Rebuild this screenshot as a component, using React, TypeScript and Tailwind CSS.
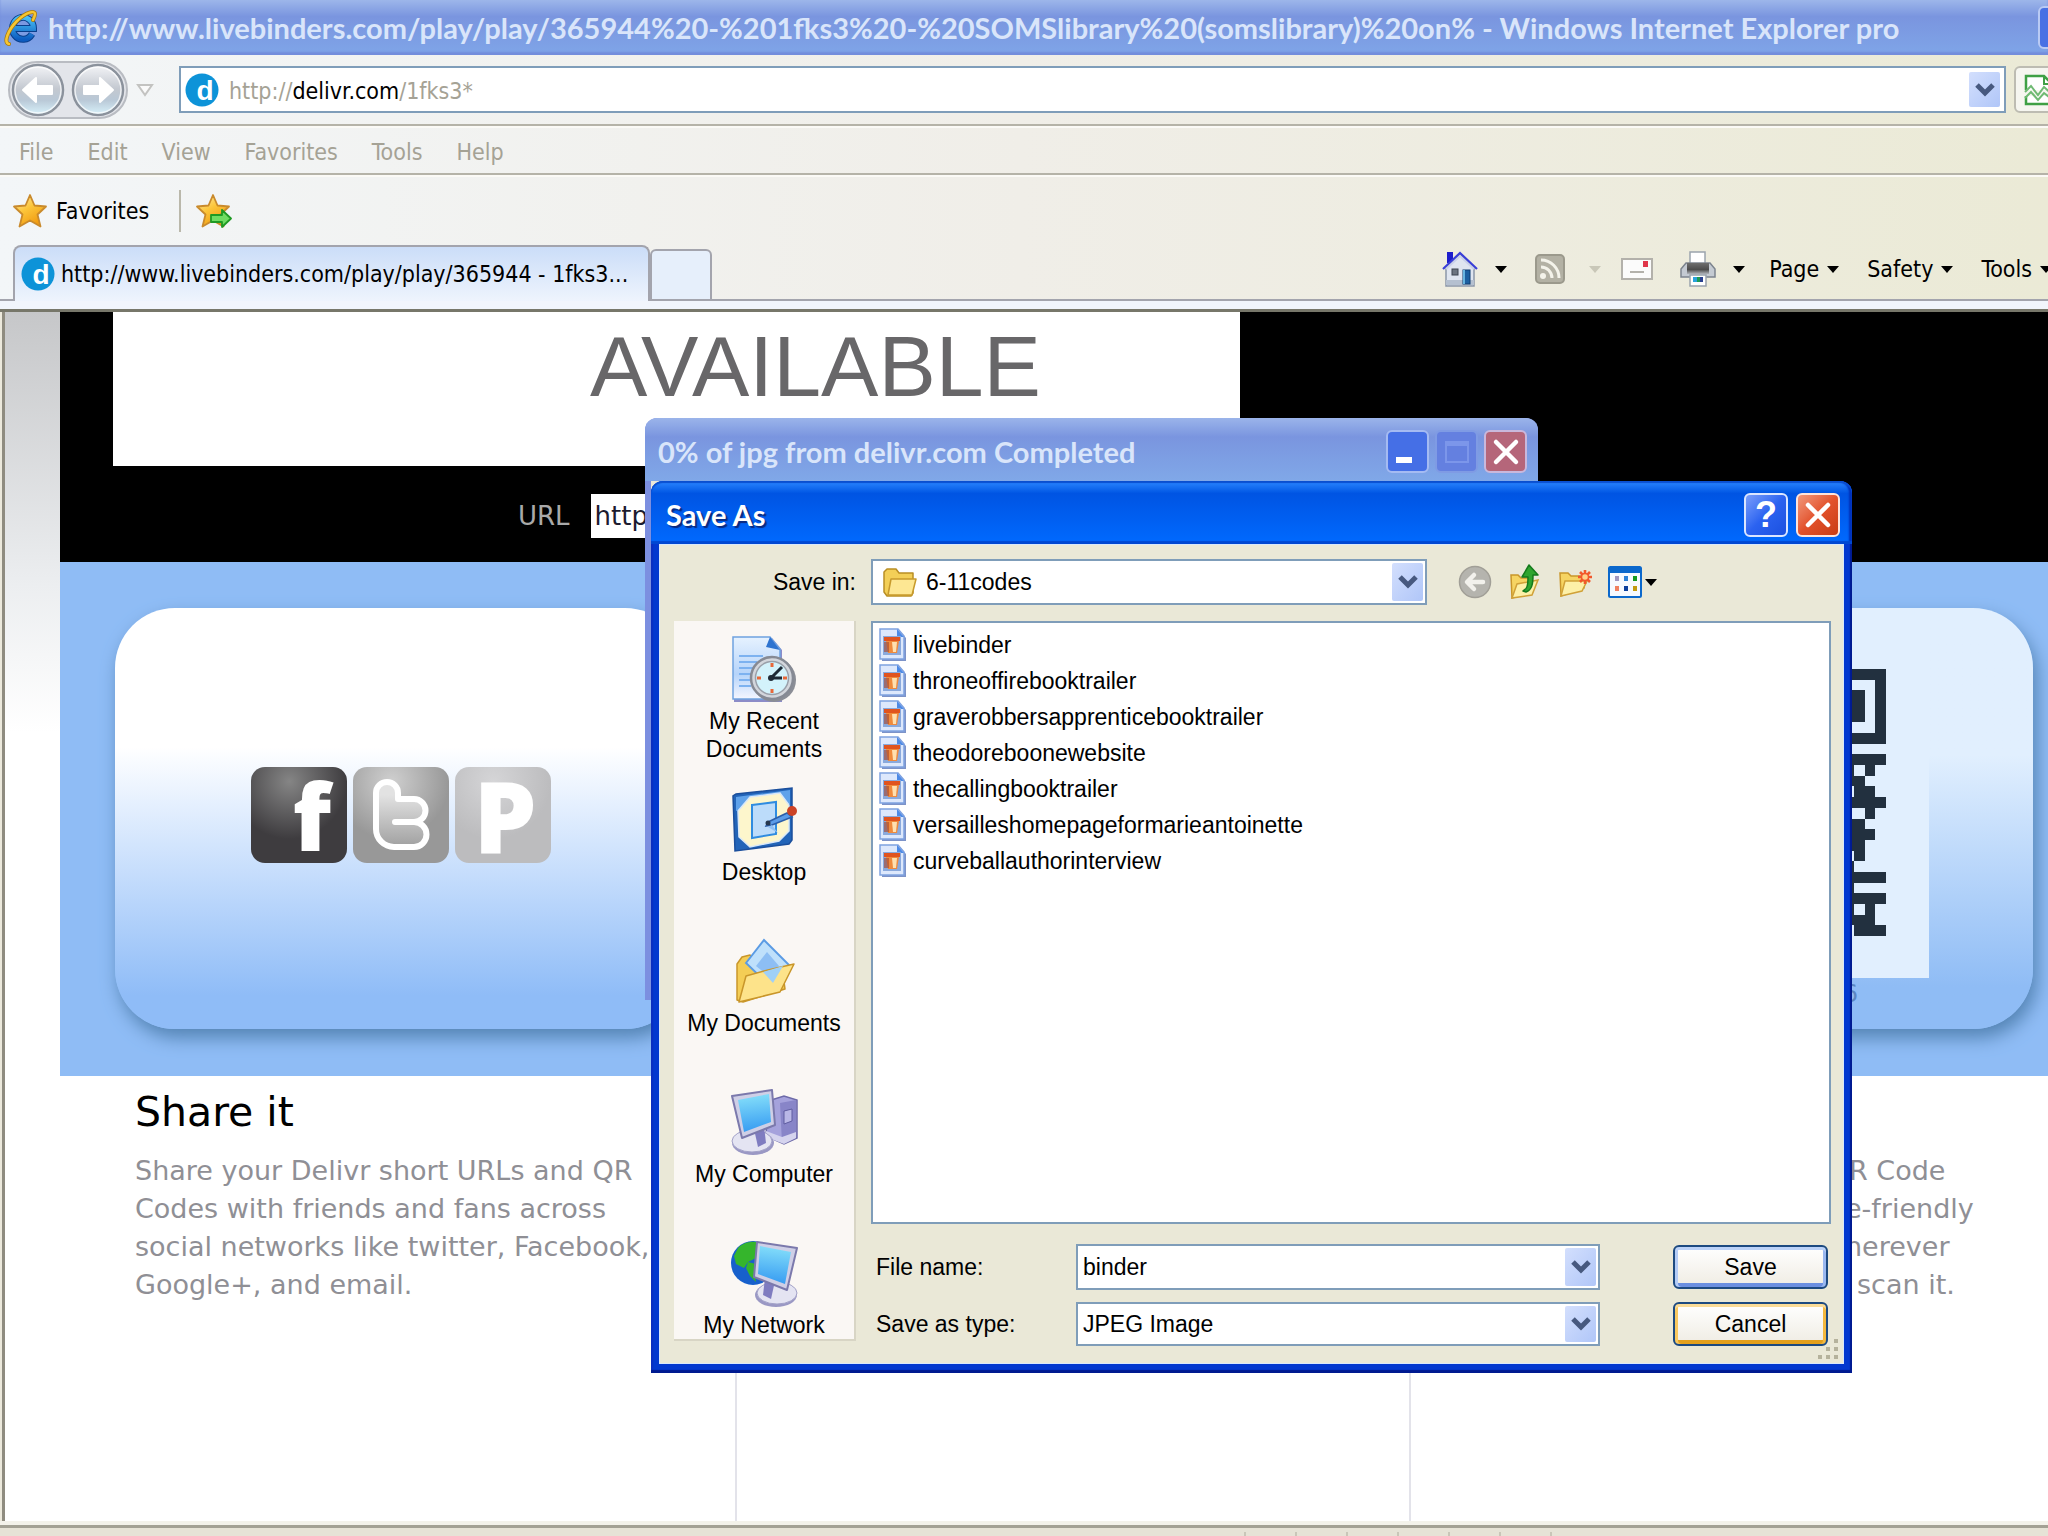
import React from 'react';

const menus = ['File', 'Edit', 'View', 'Favorites', 'Tools', 'Help'];

const files = [
  'livebinder',
  'throneoffirebooktrailer',
  'graverobbersapprenticebooktrailer',
  'theodoreboonewebsite',
  'thecallingbooktrailer',
  'versailleshomepageformarieantoinette',
  'curveballauthorinterview',
];

// Right hand columns of the QR code, one string per module row
const qrRows = [
  '1111', '0001', '1101', '1101', '1101', '0001', '1111', '0000', '1111',
  '1010', '1100', '0110', '1111', '0010', '1100', '1110', '1100', '0100',
  '1000', '1111', '1000', '1111', '1010', '1110', '0111',
];

const IeLogo: React.FC = () => (
  <svg viewBox="0 0 34 36" className="h-9 w-[34px] shrink-0" aria-hidden="true">
    <defs>
      <linearGradient id="ie" x1="0" y1="0" x2="0" y2="1">
        <stop offset="0" stopColor="#49c0f6" />
        <stop offset="1" stopColor="#0c5cc0" />
      </linearGradient>
    </defs>
    <path
      d="M28 24a10.500 11 0 1 1 1.500-5.500H11"
      fill="none"
      stroke="#0a3f8c"
      strokeWidth="7"
    />
    <path
      d="M28 24a10.500 11 0 1 1 1.500-5.500H11"
      fill="none"
      stroke="url(#ie)"
      strokeWidth="5"
    />
    <path
      d="M5 34C-1 33 4 20 13 11S31 0 31 4c0 1-1 4-2 6"
      fill="none"
      stroke="#a87a10"
      strokeWidth="4"
      strokeLinecap="round"
    />
    <path
      d="M5 34C-1 33 4 20 13 11S31 0 31 4c0 1-1 4-2 6"
      fill="none"
      stroke="#f6c632"
      strokeWidth="2.500"
      strokeLinecap="round"
    />
  </svg>
);

const DelivrIcon: React.FC = () => (
  <svg viewBox="0 0 34 34" className="size-[34px] shrink-0" aria-hidden="true">
    <circle cx="17" cy="17" r="16.500" fill="#0d93d8" />
    <text
      x="20"
      y="27"
      textAnchor="middle"
      fontSize="28"
      fontWeight="700"
      fontFamily="Liberation Sans, sans-serif"
      fill="#fff"
    >
      d
    </text>
  </svg>
);

const NavArrow: React.FC<{ flip?: boolean }> = ({ flip }) => (
  <svg viewBox="0 0 54 54" className="size-[54px]" aria-hidden="true">
    <defs>
      <linearGradient id={flip ? 'navf' : 'navb'} x1="0" y1="0" x2="0" y2="1">
        <stop offset="0" stopColor="#f4f5f8" />
        <stop offset="0.48" stopColor="#c3c8d0" />
        <stop offset="0.7" stopColor="#b9c8d6" />
        <stop offset="1" stopColor="#d9f3fc" />
      </linearGradient>
    </defs>
    <circle cx="27" cy="27" r="25" fill={flip ? 'url(#navf)' : 'url(#navb)'} stroke="#8b929c" strokeWidth="2.500" />
    <circle cx="27" cy="27" r="23" fill="none" stroke="#fff" strokeOpacity="0.7" strokeWidth="1.500" />
    <path
      d={flip ? 'M42 27 29 15v8H13v8h16v8z' : 'M12 27l13-12v8h16v8H25v8z'}
      fill="#fff"
      stroke="#fff"
      strokeWidth="2"
      strokeLinejoin="round"
    />
  </svg>
);

const Star: React.FC<{ add?: boolean }> = ({ add }) => (
  <svg viewBox="0 0 36 36" className="size-9 shrink-0" aria-hidden="true">
    <defs>
      <linearGradient id={add ? 'starA' : 'starF'} x1="0" y1="0" x2="0.6" y2="1">
        <stop offset="0" stopColor="#fff0b0" />
        <stop offset="0.5" stopColor="#fcc53a" />
        <stop offset="1" stopColor="#f09a10" />
      </linearGradient>
    </defs>
    <path
      d="M17 2l4.500 10.500L33 13.500l-8.500 8 3 12L17 27.500 6.500 33.500l3-12-8.500-8 11.500-1z"
      fill={add ? 'url(#starA)' : 'url(#starF)'}
      stroke="#c98a2c"
      strokeWidth="1.800"
      strokeLinejoin="round"
    />
    {add && (
      <path
        d="M15 22h11v-5l9 8.500-9 8.500v-5H15z"
        fill="#6fdc62"
        stroke="#1f9a24"
        strokeWidth="1.800"
        strokeLinejoin="round"
      />
    )}
  </svg>
);

const Caret: React.FC<{ light?: boolean }> = ({ light }) => (
  <svg viewBox="0 0 12 8" className="h-2 w-3 shrink-0" aria-hidden="true">
    <path d="M0 1h12L6 8z" fill={light ? '#c9c7b8' : '#000'} />
  </svg>
);

const HomeIcon: React.FC = () => (
  <svg viewBox="0 0 36 36" className="size-9" aria-hidden="true">
    <path d="M5 1h6v11H5z" fill="#1c1ccc" />
    <path d="M4 17 18 3l14 14v18H4z" fill="#dfe5f0" stroke="#8c97a8" strokeWidth="1.500" />
    <path d="M4 34h28v-5H4z" fill="#b5c0d0" />
    <path d="M1 18 18 2l17 16" fill="none" stroke="#3a3fd8" strokeWidth="2.200" />
    <path d="M4 18 18 5l14 13" fill="none" stroke="#c9d0ea" strokeWidth="2" />
    <rect x="10" y="18" width="6" height="6" fill="#6c7480" stroke="#3d4450" />
    <rect x="21" y="19" width="7" height="14" fill="#1c5fa0" stroke="#0f3d70" />
    <path d="M21 19h2v14h-2z" fill="#67b4e0" />
  </svg>
);

const RssIcon: React.FC = () => (
  <svg viewBox="0 0 30 30" className="size-[30px]" aria-hidden="true">
    <rect x="1" y="1" width="28" height="28" rx="4" fill="#b3b1a4" stroke="#9b998c" strokeWidth="2" />
    <circle cx="8" cy="22" r="3" fill="#f4f3ea" />
    <path d="M6 13a11 11 0 0 1 11 11M6 6a18 18 0 0 1 18 18" fill="none" stroke="#f4f3ea" strokeWidth="3" />
  </svg>
);

const MailIcon: React.FC = () => (
  <svg viewBox="0 0 32 24" className="h-6 w-8" aria-hidden="true">
    <rect x="1" y="2" width="30" height="20" fill="#fbfbfb" stroke="#b3b1ab" strokeWidth="2" />
    <path d="M9 15h14" stroke="#b3b1ab" strokeWidth="2" />
    <rect x="22" y="4" width="5" height="6" fill="#e0364a" />
  </svg>
);

const PrinterIcon: React.FC = () => (
  <svg viewBox="0 0 36 36" className="size-9" aria-hidden="true">
    <defs>
      <linearGradient id="prn" x1="0" y1="0" x2="0" y2="1">
        <stop offset="0" stopColor="#6e6e6e" />
        <stop offset="0.6" stopColor="#4c4c4c" />
        <stop offset="1" stopColor="#b0b4ba" />
      </linearGradient>
    </defs>
    <rect x="10" y="1" width="15" height="14" fill="#fff" stroke="#9ba4ad" strokeWidth="1.500" />
    <path d="M6 12h24l5 6v8H1v-8z" fill="#c4cad2" stroke="#7c848e" strokeWidth="1.500" />
    <path d="M7 12h22v11H7z" fill="url(#prn)" />
    <path d="M10 24h16v11H10z" fill="#fff" stroke="#9ba4ad" strokeWidth="1.500" />
    <path d="M13 26h4v5h-4z" fill="#2aa3dc" />
    <path d="M17 26h3v5h-3z" fill="#1d9a55" />
    <path d="M20 26h3v5h-3z" fill="#28418f" />
  </svg>
);

const BrokenPageIcon: React.FC = () => (
  <svg viewBox="0 0 32 32" className="size-8 shrink-0" aria-hidden="true">
    <path d="M2 16V2h18l8 8v6M2 22v8h26v-8" fill="#fff" stroke="#3fa045" strokeWidth="2.500" />
    <path d="M20 2v8h8" fill="none" stroke="#3fa045" strokeWidth="2" />
    <path d="M1 18l6-6 7 9 6-8 9 8M1 24l6-6 7 8 6-7 9 7" fill="none" stroke="#6fba73" strokeWidth="2" />
  </svg>
);

const BackRound: React.FC = () => (
  <svg viewBox="0 0 34 34" className="size-[34px]" aria-hidden="true">
    <circle cx="17" cy="17" r="15.500" fill="#b5b4ae" stroke="#a19f97" strokeWidth="1.500" />
    <path d="M9 17l7-7M9 17l7 7M10 17h15" fill="none" stroke="#f2f1ec" strokeWidth="4.500" strokeLinecap="round" />
  </svg>
);

const UpFolder: React.FC = () => (
  <svg viewBox="0 0 34 36" className="h-9 w-[34px]" aria-hidden="true">
    <path d="M3 11h7l3 3h11v14L4 34z" fill="#f6d462" stroke="#c9962a" strokeWidth="1.500" />
    <path d="M4 34 9 20l21-4-6 15z" fill="#fdf0a8" stroke="#d0a138" strokeWidth="1.500" />
    <path
      d="M15 27c4-2 5-5 5-14h-6L21 1l9 10h-5c0 9-1 15-7 17z"
      fill="#2fa52f"
      stroke="#157a1c"
      strokeWidth="1.500"
      strokeLinejoin="round"
    />
  </svg>
);

const NewFolder: React.FC = () => (
  <svg viewBox="0 0 34 34" className="size-[34px]" aria-hidden="true">
    <path d="M2 8h8l3 3h13v12L3 31z" fill="#f6d462" stroke="#c9962a" strokeWidth="1.500" />
    <path d="M3 31 7 16h22l-5 10z" fill="#fdf0a8" stroke="#d0a138" strokeWidth="1.500" />
    <path
      d="M27 5v14M20 12h14M22 7l10 10M32 7 22 17"
      stroke="#f2582c"
      strokeWidth="2.600"
    />
    <circle cx="27" cy="12" r="3.500" fill="#ffd08a" stroke="#f2582c" strokeWidth="1.500" />
  </svg>
);

const ViewsIcon: React.FC = () => (
  <svg viewBox="0 0 34 32" className="h-8 w-[34px]" aria-hidden="true">
    <rect x="1" y="1" width="32" height="30" rx="1.500" fill="#f7faff" stroke="#0b68cc" strokeWidth="2" />
    <rect x="1" y="1" width="32" height="6" fill="#0b68cc" />
    <rect x="7" y="10" width="4" height="5" fill="#a097c0" />
    <rect x="16" y="10" width="4" height="5" fill="#2d82d8" />
    <rect x="25" y="10" width="4" height="5" fill="#159a20" />
    <rect x="7" y="20" width="4" height="5" fill="#f08060" />
    <rect x="16" y="20" width="4" height="5" fill="#0c3f9c" />
    <rect x="25" y="20" width="4" height="5" fill="#c29a10" />
  </svg>
);

const FolderIcon: React.FC = () => (
  <svg viewBox="0 0 36 30" className="h-[30px] w-9" aria-hidden="true">
    <path d="M2 5l3-3h9l3 4h14v20l-2 3H5L2 25z" fill="#f3cf57" stroke="#b98e24" strokeWidth="1.500" strokeLinejoin="round" />
    <path d="M6 28 9 12h25l-4 16z" fill="#fde793" stroke="#c79a2c" strokeWidth="1.500" strokeLinejoin="round" />
  </svg>
);

const FileIcon: React.FC = () => (
  <svg viewBox="0 0 28 34" className="h-[34px] w-7 shrink-0" aria-hidden="true">
    <path d="M3 3h18l6 7v23H3z" fill="#7d93c8" />
    <path d="M1 1h18l6 7v23H1z" fill="#dde8fc" stroke="#7fa2e0" strokeWidth="1.500" />
    <path d="M18 1v8h7z" fill="#4d8ae6" />
    <rect x="4" y="8" width="18" height="19" fill="#8aa9dc" />
    <path d="M5 9h16v4H5z" fill="#e0541f" />
    <path d="M7 13h13l-2 12H9z" fill="#f08a3c" />
    <path d="M13 14h5l-1 10h-3z" fill="#ffe0b0" />
    <path d="M5 14h5v10H5z" fill="#a4462e" opacity="0.600" />
  </svg>
);

const RecentIcon: React.FC = () => (
  <svg viewBox="0 0 68 68" className="size-[68px]" aria-hidden="true">
    <defs>
      <linearGradient id="rdoc" x1="0" y1="0" x2="0" y2="1">
        <stop offset="0" stopColor="#e6f2ff" />
        <stop offset="0.6" stopColor="#b6d4fa" />
        <stop offset="1" stopColor="#f4f6ff" />
      </linearGradient>
    </defs>
    <path d="M4 66V2h38l10 12v52z" fill="#8c8cc8" />
    <path d="M3 63V1h37l10 12v50z" fill="url(#rdoc)" stroke="#6fa2e0" strokeWidth="1.500" />
    <path d="M40 1l-4 10 14 3z" fill="#2f74d0" />
    <path d="M9 20h24M9 26h18M9 32h14M9 38h12M9 44h12M9 50h12" stroke="#7db2f0" strokeWidth="2" />
    <circle cx="44" cy="44" r="22" fill="#8b8e96" />
    <circle cx="42" cy="42" r="21" fill="#d3d6dc" stroke="#868a94" strokeWidth="2.500" />
    <circle cx="42" cy="42" r="16.500" fill="#d3f2fb" stroke="#9aa0aa" strokeWidth="1.500" />
    <path d="M42 27v4M42 53v4M27 42h4M53 42h4" stroke="#e8683a" strokeWidth="3" />
    <path d="M40 43l12-12M42 42h10" stroke="#1f2a36" strokeWidth="3" />
    <circle cx="41" cy="42" r="3" fill="#1f2a36" />
  </svg>
);

const DesktopIcon: React.FC = () => (
  <svg viewBox="0 0 68 68" className="size-[68px]" aria-hidden="true">
    <path d="M5 64 3 9l3-2 56-6v52l-3 4z" fill="#2264b8" stroke="#1b4f9c" strokeWidth="1.500" />
    <path d="M6 10l54-7v14L6 24z" fill="#5fa2ea" />
    <path d="M8 24 20 10l30-4 9 12v26L49 54 20 60 9 50z" fill="#fdf6cc" stroke="#d9e8f8" strokeWidth="1.500" />
    <path d="M22 18l24-3v32l-24 4z" fill="#bcdcfa" stroke="#2f8ce0" strokeWidth="2" />
    <path d="M38 35 57 26l5 4-20 8-6 1z" fill="#5b9ce8" stroke="#2c5ea8" strokeWidth="1.500" />
    <path d="M42 38l6 8-10-6z" fill="#8fc0f4" />
    <circle cx="62" cy="24" r="5" fill="#cc4326" />
    <circle cx="38" cy="36" r="2.500" fill="#26384e" />
  </svg>
);

const DocumentsIcon: React.FC = () => (
  <svg viewBox="0 0 68 68" className="size-[68px]" aria-hidden="true">
    <path d="M7 62V26l5-7 8-2 8 8 24 4 3 22-42 13z" fill="#f4cd55" stroke="#c9962a" strokeWidth="1.500" strokeLinejoin="round" />
    <path d="M16 25 34 2l26 26-18 22z" fill="#bfe0fb" stroke="#5b9be4" strokeWidth="2" />
    <path d="M26 28l11-14 12 14-8 12z" fill="#8dbef4" />
    <path d="M9 64 16 38l22-6 26-6-14 28z" fill="#fde38a" stroke="#c9962a" strokeWidth="1.500" strokeLinejoin="round" />
    <path d="M33 34l20-6-10 17z" fill="#9fd0f8" />
  </svg>
);

const Monitor: React.FC<{ id: string }> = ({ id }) => (
  <>
    <defs>
      <linearGradient id={id} x1="0.300" y1="0" x2="0.400" y2="1">
        <stop offset="0" stopColor="#86e0fa" />
        <stop offset="1" stopColor="#379cf2" />
      </linearGradient>
    </defs>
    <ellipse cx="23" cy="54" rx="21" ry="12" fill="#9a98c4" />
    <ellipse cx="22" cy="52" rx="20" ry="11" fill="#e4e4f2" stroke="#a3a2c8" />
    <path d="M24 40l10-3 2 17-8 4z" fill="#7f7cc0" />
    <path d="M2 7 42 1l3 35L12 49z" fill="#cfcfe6" stroke="#7b79ac" strokeWidth="2" strokeLinejoin="round" />
    <path d="M8 11 39 5l2 28-27 10z" fill={`url(#${id})`} />
  </>
);

const ComputerIcon: React.FC = () => (
  <svg viewBox="0 0 68 68" className="size-[68px]" aria-hidden="true">
    <path d="M38 12l16-5 13 4v38L54 55l-18-8z" fill="#a5a2dc" stroke="#6d6aa8" strokeWidth="1.500" />
    <path d="M50 14l16-3v38l-14 5z" fill="#8885c8" />
    <path d="M54 22l8-2v12l-8 3z" fill="#b9b7e6" stroke="#5f5ca0" />
    <path d="M36 42l16 6 14-5v6l-12 6-18-7z" fill="#d5d4ee" />
    <Monitor id="scrA" />
  </svg>
);

const NetworkIcon: React.FC = () => (
  <svg viewBox="0 0 68 68" className="size-[68px]" aria-hidden="true">
    <circle cx="23" cy="23" r="22" fill="#1760cc" />
    <path d="M8 8C14 1 26 0 34 4l-6 6-2 8-8 4-4 6-8-4-2-8z" fill="#35b52c" />
    <path d="M18 22l8 2-2 8 2 10-6-6-4-8z" fill="#35b52c" />
    <g transform="translate(69 1) scale(-1 1)">
      <Monitor id="scrB" />
    </g>
  </svg>
);

const places = [
  { label: 'My Recent Documents', icon: <RecentIcon /> },
  { label: 'Desktop', icon: <DesktopIcon /> },
  { label: 'My Documents', icon: <DocumentsIcon /> },
  { label: 'My Computer', icon: <ComputerIcon /> },
  { label: 'My Network', icon: <NetworkIcon /> },
];

const DropArrow: React.FC = () => (
  <span className="pointer-events-none absolute inset-y-1 right-1 flex w-[31px] items-center justify-center rounded-xs bg-linear-to-br from-[#d3dffd] to-[#b0c6f8]">
    <svg viewBox="0 0 20 14" className="h-[14px] w-5" aria-hidden="true">
      <path d="M2 2l8 8 8-8" fill="none" stroke="#47597f" strokeWidth="5" />
    </svg>
  </span>
);

const CrossIcon: React.FC = () => (
  <svg viewBox="0 0 28 28" className="size-7" aria-hidden="true">
    <path d="M4 4l20 20M24 4 4 24" stroke="#fff" strokeWidth="4.500" strokeLinecap="round" />
  </svg>
);

const SocialTile: React.FC<{ glyph: string }> = ({ glyph }) => {
  const tones: Record<string, [string, string]> = {
    f: ['#858585', '#3e3c3f'],
    t: ['#cfcfcf', '#989898'],
    P: ['#d5d5d7', '#bcbcbe'],
  };
  const [light, dark] = tones[glyph];
  return (
    <svg viewBox="0 0 96 96" className="size-24 overflow-visible">
      <defs>
        <radialGradient id={`tile${glyph}`} cx="0.400" cy="0.150" r="0.600">
          <stop offset="0" stopColor={light} />
          <stop offset="1" stopColor={dark} />
        </radialGradient>
        <linearGradient id="bird" x1="0" y1="0" x2="0" y2="1">
          <stop offset="0.200" stopColor="#e2e2e2" />
          <stop offset="1" stopColor="#a0a0a0" />
        </linearGradient>
      </defs>
      <rect width="96" height="96" rx="14" fill={`url(#tile${glyph})`} />
      {glyph === 'f' && (
        <text x="61" y="84" textAnchor="middle" fontSize="93" fontWeight="800" fontFamily="Open Sans, sans-serif" fill="#fff">f</text>
      )}
      {/* Rounded twitter mark: hollow bar with two lobes */}
      {glyph === 't' && (
        <path
          d="M23 26a11 11 0 0 1 22 0v6h16a11.500 11.500 0 0 1 0 23H42h19a12 12 0 0 1 0 25H41a18 18 0 0 1-18-18z"
          fill="url(#bird)"
          stroke="#fff"
          strokeWidth="6"
          strokeLinejoin="round"
        />
      )}
      {glyph === 'P' && (
        <text x="50" y="87" textAnchor="middle" fontSize="100" fontWeight="800" fontFamily="Open Sans, sans-serif" fill="#fff">P</text>
      )}
    </svg>
  );
};

const QrCode: React.FC = () => (
  <svg viewBox="0 0 4 25" className="h-[267px] w-[43px]" shapeRendering="crispEdges" role="img" aria-label="QR code">
    {qrRows.map((row, y) =>
      row.split('').map((cell, x) =>
        cell === '1' ? <rect key={`${x}-${y}`} x={x} y={y} width="1" height="1" fill="#22303f" /> : null
      )
    )}
  </svg>
);

const BrowserChrome: React.FC = () => (
  <header className="font-['DejaVu_Sans_Condensed','DejaVu_Sans',sans-serif]">
    {/* Title bar */}
    <div className="flex h-[55px] items-center gap-[10px] overflow-hidden bg-linear-to-b from-[#9db6ea] via-[#7a95df] via-30% to-[#7fa5e8] pl-1 shadow-[inset_0_-3px_2px_#738ddc]">
      <IeLogo />
      <h1 className="flex-1 truncate font-[Lato,sans-serif] text-[29px] leading-9 font-bold text-[#d9e5fa]">
        http://www.livebinders.com/play/play/365944%20-%201fks3%20-%20SOMSlibrary%20(somslibrary)%20on% - Windows Internet Explorer pro
      </h1>
      <button aria-label="Minimize" className="-mr-8 h-[43px] w-[42px] shrink-0 rounded-md border-2 border-[#b9caf4] bg-[#4870e4]" />
    </div>

    <div className="bg-linear-to-r from-[#f3f6f8] via-[#f0eee8] via-50% to-[#ebead6]">
      {/* Navigation */}
      <div className="flex h-[71px] items-center overflow-hidden border-b-2 border-[#b5b3a8] pl-2">
        <div className="flex gap-[6px] rounded-full border-2 border-[#b9bcc2] bg-[#e3e5ea] px-px">
          <button aria-label="Back"><NavArrow /></button>
          <button aria-label="Forward"><NavArrow flip /></button>
        </div>
        <button aria-label="Recent pages" className="ml-2 flex w-[18px] shrink-0 justify-center">
          <svg viewBox="0 0 18 14" className="h-[14px] w-[18px]" aria-hidden="true">
            <path d="M2 2h14l-7 10z" fill="#fafafa" stroke="#c3c3c1" strokeWidth="2" />
          </svg>
        </button>
        <div className="relative ml-[25px] flex h-[47px] flex-1 items-center gap-[10px] border-2 border-[#7f9db9] bg-white pl-1 text-[23px]">
          <DelivrIcon />
          <div className="pt-1 text-[#a5a295]">
            http://<span className="text-black">delivr.com</span>/1fks3*
          </div>
          <DropArrow />
        </div>
        <button aria-label="Compatibility view" className="-mr-3 ml-2 flex h-[47px] w-[46px] shrink-0 items-center rounded-md border-2 border-[#bdbcb2] bg-[#f6f6f0] pl-2">
          <BrokenPageIcon />
        </button>
      </div>

      {/* Menu */}
      <nav className="flex h-[49px] items-center gap-[34px] border-t-2 border-b-2 border-t-[#fbfaf6] border-b-[#b5b3a8] pt-1 pl-[19px] text-[23px] text-[#a5a295]">
        {menus.map((menu) => (
          <button key={menu}>{menu}</button>
        ))}
      </nav>

      {/* Favorites */}
      <div className="flex h-[70px] items-center border-t-2 border-[#fbfaf6] pl-[13px] text-[23px]">
        <button className="flex items-center gap-[7px]">
          <Star />
          Favorites
        </button>
        <span className="mr-[15px] ml-[30px] h-[42px] w-[2px] bg-[#bab8ab]" />
        <button aria-label="Add to favorites"><Star add /></button>
      </div>

      {/* Tabs and command bar */}
      <div className="flex h-[56px] items-end overflow-hidden text-[23px]">
        <span className="h-[2px] w-[13px] bg-[#a3a4ad]" />
        <button className="flex h-[56px] w-[637px] items-center gap-[6px] rounded-t-lg border-2 border-b-0 border-[#a3a4ad] bg-linear-to-b from-[#cbddf8] to-[#eef4fd] pl-[6px]">
          <DelivrIcon />
          <span className="whitespace-nowrap">http://www.livebinders.com/play/play/365944 - 1fks3...</span>
        </button>
        <button aria-label="New tab" className="h-[52px] w-[62px] rounded-t-md border-2 border-[#a3a4ad] bg-[#e6effb]" />
        <div className="flex h-[56px] flex-1 items-center justify-end overflow-hidden border-b-2 border-[#a3a4ad] pb-[6px]">
          <button aria-label="Home" className="flex items-center gap-[17px]"><HomeIcon /><Caret /></button>
          <button aria-label="Feeds" className="ml-[28px] flex items-center gap-6"><RssIcon /><Caret light /></button>
          <button aria-label="Read mail" className="ml-[20px]"><MailIcon /></button>
          <button aria-label="Print" className="ml-[27px] flex items-center gap-[17px]"><PrinterIcon /><Caret /></button>
          <button className="ml-[24px] flex items-center gap-2">Page<Caret /></button>
          <button className="ml-7 flex items-center gap-2">Safety<Caret /></button>
          <button className="-mr-1 ml-7 flex items-center gap-2">Tools<Caret /></button>
        </div>
      </div>
    </div>
    <div className="h-[11px] border-b-[3px] border-[#77776a] bg-[#f1f5fc]" />
  </header>
);

const PageContent: React.FC = () => (
  <main className="ml-[2px] flex flex-1 border-l-[3px] border-[#8f8c80] bg-white font-['DejaVu_Sans',sans-serif]">
    <div className="h-[420px] w-[55px] shrink-0 bg-linear-to-b from-[#c6c7c9] via-[#eceef0] via-65% to-white" />
    <div className="flex min-w-0 flex-1 flex-col">
      <section className="h-[250px] bg-black pl-[53px]">
        <div className="h-[154px] w-[1127px] bg-white pl-[477px]">
          <h2 className="font-['Liberation_Sans',sans-serif] text-[86px] leading-[108px] text-[#686769]">AVAILABLE</h2>
        </div>
        <div className="flex items-center gap-[21px] pt-7 pl-[405px] text-[26px]">
          <label htmlFor="short-url" className="text-[#a9a9a9]">URL</label>
          <input id="short-url" readOnly defaultValue="http://" className="h-11 w-[400px] bg-white px-1 text-[#1c1c30]" />
        </div>
      </section>

      <section className="-mr-[37px] grid h-[514px] grid-cols-3 bg-[#8fbcf5] pl-[3px]">
        {[0, 1, 2].map((card) => (
          <div
            key={card}
            className={`mx-[52px] mt-[46px] h-[421px] rounded-[60px] shadow-[4px_9px_18px_0_#5484b4] bg-linear-to-b ${
              card === 2
                ? 'from-[#e1effe] from-35% to-[#8fbcf5] to-90%'
                : 'from-white from-33% to-[#8fbcf7] to-92%'
            }`}
          >
            {card === 0 && (
              <div className="flex gap-[6px] pt-[159px] pl-[136px]">
                <a href="#facebook" aria-label="Facebook"><SocialTile glyph="f" /></a>
                <a href="#twitter" aria-label="Twitter"><SocialTile glyph="t" /></a>
                <a href="#pinterest" aria-label="Pinterest"><SocialTile glyph="P" /></a>
              </div>
            )}
            {card === 2 && (
              <div className="flex flex-col items-end pt-[10px] pr-[104px]">
                <div className="flex h-[360px] w-[320px] justify-end bg-[#e1effe] pt-[51px] pr-[43px]">
                  <QrCode />
                </div>
                <p className="pr-[71px] text-[24px] leading-8 text-[#5c86c0]">6</p>
              </div>
            )}
          </div>
        ))}
      </section>

      <section className="-mr-[37px] grid flex-1 grid-cols-3 pl-[3px] text-[27px] leading-[38px] text-[#8f8f95]">
        <div className="border-r-2 border-[#e3e3ea] pt-[14px] pl-[72px]">
          <h3 className="text-[41px] leading-[44px] text-black">Share it</h3>
          <p className="mt-[18px] w-[530px]">
            Share your Delivr short URLs and QR Codes with friends and fans across social networks like twitter, Facebook, Google+, and email.
          </p>
        </div>
        <div className="border-r-2 border-[#e3e3ea]" />
        <div className="pt-[76px] pl-[434px] whitespace-nowrap">
          <p className="pl-1">R Code</p>
          <p>e-friendly</p>
          <p>herever</p>
          <p className="pl-3">scan it.</p>
        </div>
      </section>
    </div>
  </main>
);

const DownloadWindow: React.FC = () => (
  <section
    aria-label="Download"
    className="absolute top-[418px] left-[645px] h-[582px] w-[893px] rounded-t-xl bg-[#7c8fe0]"
  >
    <div className="flex h-[63px] items-center rounded-t-xl bg-linear-to-b from-[#9bb4ea] via-[#7a95df] via-30% to-[#80a8e8] pt-1 pr-[11px] pl-[13px]">
      <h2 className="flex-1 font-[Lato,sans-serif] text-[29px] leading-9 font-bold text-[#d9e5fa]">
        0% of jpg from delivr.com Completed
      </h2>
      <div className="flex gap-[6px]">
        <button aria-label="Minimize" className="flex size-[43px] items-end rounded-md border-2 border-[#a5bbf2] bg-[#456fe6] pb-2 pl-2">
          <span className="h-[6px] w-4 bg-white" />
        </button>
        <button aria-label="Maximize" className="flex size-[43px] items-center justify-center rounded-md border-2 border-[#7f9be4] bg-[#6480e0]">
          <span className="h-[22px] w-6 border-2 border-t-[5px] border-[#7c96ea]" />
        </button>
        <button aria-label="Close" className="flex size-[43px] items-center justify-center rounded-md border-2 border-[#c9b8dc] bg-[#b5667a]">
          <CrossIcon />
        </button>
      </div>
    </div>
    <div className="mx-[6px] h-6 w-10 bg-[#ece9d8]" />
  </section>
);

const SaveAsDialog: React.FC = () => (
  <section
    role="dialog"
    aria-labelledby="save-title"
    className="absolute top-[481px] left-[651px] w-[1201px] rounded-t-xl bg-[#0238cf] px-2 pb-[9px] font-['Liberation_Sans',sans-serif] text-[23px] text-black shadow-[inset_-2px_-3px_1px_#001a90,inset_2px_0_1px_#0a2fc0]"
  >
    <div className="-mx-2 flex h-[63px] items-center gap-2 rounded-t-xl bg-linear-to-b from-[#2b86ff] via-[#0054e3] via-20% to-[#006aff] pt-1 pr-3 pl-[15px] shadow-[inset_0_2px_1px_#0a4fd0,inset_0_-3px_1px_#0047d2,inset_-3px_0_2px_#0030b8]">
      <h2 id="save-title" className="flex-1 font-[Lato,sans-serif] text-[29px] leading-9 font-bold text-white [text-shadow:2px_2px_1px_#0a2a80]">
        Save As
      </h2>
      <button aria-label="Help" className="flex size-11 items-center justify-center rounded-md border-2 border-[#dbe6ff] bg-linear-to-br from-[#7a9dfa] via-[#2b62f0] to-[#1b50e0] text-[36px] leading-9 font-bold text-white">
        <span aria-hidden="true">?</span>
      </button>
      <button aria-label="Close" className="flex size-11 items-center justify-center rounded-md border-2 border-[#ffe4da] bg-linear-to-br from-[#f0977a] via-[#e2512a] to-[#c93c14]">
        <CrossIcon />
      </button>
    </div>

    <div className="border border-[#d9e8fb] bg-[#eae8d7] pt-[14px] pr-3 pb-[17px] pl-[14px]">
      {/* Save in */}
      <div className="flex items-center gap-[15px]">
        <label htmlFor="save-in" className="w-[182px] text-right">Save in:</label>
        <div className="relative h-[46px] w-[556px]">
          <select id="save-in" className="size-full appearance-none border-2 border-[#7f9db9] bg-white pl-[53px]">
            <option>6-11codes</option>
          </select>
          <span className="pointer-events-none absolute top-2 left-[11px]"><FolderIcon /></span>
          <DropArrow />
        </div>
        <div className="ml-4 flex items-center gap-4">
          <button aria-label="Back"><BackRound /></button>
          <button aria-label="Up one level"><UpFolder /></button>
          <button aria-label="Create new folder"><NewFolder /></button>
          <button aria-label="Views" className="flex items-center gap-[3px]"><ViewsIcon /><Caret /></button>
        </div>
      </div>

      <div className="mt-4 flex items-start gap-[15px]">
        {/* Places bar */}
        <nav className="flex h-[720px] w-[182px] shrink-0 flex-col overflow-hidden border-r-2 border-b-2 border-[#d8d5c5] bg-[#faf7f4] pt-[15px] leading-7">
          {places.map((place) => (
            <button key={place.label} className="flex h-[151px] shrink-0 flex-col items-center justify-start px-3">
              {place.icon}
              <span className="mt-[3px] flex min-h-7 items-center">{place.label}</span>
            </button>
          ))}
        </nav>

        <div className="flex-1">
          <ul className="h-[603px] border-2 border-[#7f9db9] bg-white px-[6px] pt-1">
            {files.map((file) => (
              <li key={file} className="flex h-9 items-center gap-[6px]">
                <FileIcon />
                {file}
              </li>
            ))}
          </ul>
          <div className="mt-5 grid grid-cols-[200px_524px_1fr] items-center gap-y-3 pl-[5px]">
            <label htmlFor="file-name">File name:</label>
            <div className="relative h-[46px]">
              <input id="file-name" defaultValue="binder" className="size-full border-2 border-[#7f9db9] bg-white px-[5px]" />
              <DropArrow />
            </div>
            <button className="mr-[3px] h-11 w-[155px] justify-self-end rounded-md border-2 border-[#1d4a80] bg-linear-to-b from-white to-[#efece3] shadow-[inset_0_3px_0_#bcd2f8,inset_3px_0_0_#b4ccf6,inset_-3px_0_0_#9ab8f0,inset_0_-4px_0_#6b8fe0]">
              Save
            </button>
            <label htmlFor="file-type">Save as type:</label>
            <div className="relative h-11">
              <select id="file-type" className="size-full appearance-none border-2 border-[#7f9db9] bg-white px-[5px]">
                <option>JPEG Image</option>
              </select>
              <DropArrow />
            </div>
            <button className="mr-[3px] h-11 w-[155px] justify-self-end rounded-md border-2 border-[#1d4a80] bg-linear-to-b from-white to-[#efece3] shadow-[inset_0_3px_0_#fbdc98,inset_3px_0_0_#f8c860,inset_-3px_0_0_#f3b840,inset_0_-4px_0_#e4a01c]">
              Cancel
            </button>
          </div>
        </div>
      </div>
    </div>
    <svg viewBox="0 0 24 24" className="absolute right-3 bottom-3 size-6" aria-hidden="true">
      <path d="M18 2h4v4h-4zM18 10h4v4h-4zM10 10h4v4h-4zM18 18h4v4h-4zM10 18h4v4h-4zM2 18h4v4H2z" fill="#b5b29c" />
    </svg>
  </section>
);

const App: React.FC = () => (
  <div className="relative flex min-h-screen flex-col overflow-hidden bg-[#ece9dc]">
    <BrowserChrome />
    <PageContent />
    <footer className="h-[15px] border-t-4 border-[#f3f2ea] bg-[#e6e3d6]">
      <div className="h-[3px] bg-[#a3a194]" />
      <div className="flex h-2 justify-end gap-[49px] pr-[496px]">
        {[0, 1, 2, 3, 4, 5, 6].map((pane) => (
          <span key={pane} className="mt-1 w-[2px] bg-[#c9c6b8]" />
        ))}
      </div>
    </footer>
    <DownloadWindow />
    <SaveAsDialog />
  </div>
);

export default App;
